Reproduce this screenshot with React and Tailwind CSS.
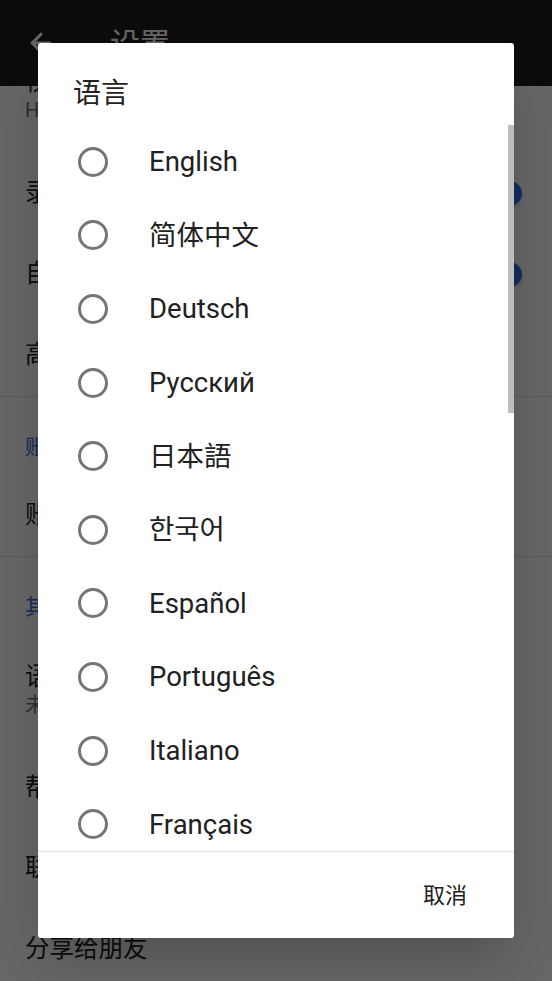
import { ArrowLeft } from "lucide-react";

const languages = [
  "English",
  "简体中文",
  "Deutsch",
  "Русский",
  "日本語",
  "한국어",
  "Español",
  "Português",
  "Italiano",
  "Français",
  "繁體中文",
  "Nederlands",
  "Polski",
  "Türkçe",
  "Tiếng Việt",
  "Bahasa Indonesia",
  "Svenska",
  "Čeština",
  "Magyar",
  "Ελληνικά",
  "Українська",
  "ไทย",
  "Dansk",
  "Suomi",
];

function Switch() {
  return (
    <div className="relative w-[52px] h-[25px] flex items-center">
      <div className="w-full h-[20px] rounded-full bg-[#90b8f5]" />
      <div className="absolute right-0 top-0 w-[25px] h-[25px] rounded-full bg-[#2f74e6] shadow-md" />
    </div>
  );
}

function Row({ title, sub, height, toggle }) {
  return (
    <div
      className="flex items-center justify-between pl-[25px] pr-[30px]"
      style={{ height }}
    >
      <div className="flex flex-col">
        <span className="text-[24.5px] leading-[28px] text-[#212121]">{title}</span>
        {sub && (
          <span className="text-[20px] leading-[28px] text-[#757575]">{sub}</span>
        )}
      </div>
      {toggle && <Switch />}
    </div>
  );
}

function Section({ title }) {
  return (
    <div className="pt-[36px] pb-[13px] pl-[25px] text-[21px] leading-[28px] text-[#2f6fd6]">
      {title}
    </div>
  );
}

export default function App() {
  return (
    <div className="relative w-[552px] h-[981px] overflow-hidden bg-white font-['Roboto','Noto_Sans_CJK_SC',sans-serif]">
      <div className="relative z-10 h-[86px] bg-[#1f1f1f] flex items-center text-white">
        <ArrowLeft className="ml-[26px] w-[30px] h-[30px]" strokeWidth={2.5} />
        <span className="ml-[54px] text-[30px]">设置</span>
      </div>

      <div className="-mt-[46px]">
        <Row title="视频画质" sub="HD 高清" height={112} />
        <Row title="录制音频" height={82} toggle />
        <Row title="自动保存" height={80} toggle />
        <Row title="高级设置" height={82} />
        <div className="h-px bg-[#e0e0e0]" />
        <Section title="账户" />
        <Row title="账户管理" height={82} />
        <div className="h-px bg-[#e0e0e0]" />
        <Section title="其他" />
        <Row title="语言" sub="未设置" height={114} />
        <Row title="帮助" height={80} />
        <Row title="联系我们" height={80} />
        <Row title="分享给朋友" height={82} />
      </div>

      <div className="absolute inset-0 z-20 bg-black/60" />

      <div className="absolute z-30 left-[38px] top-[43px] w-[476px] h-[895px] bg-white rounded-[3px] shadow-2xl flex flex-col">
        <div className="h-[82px] shrink-0 pl-[35px] pt-[33px] text-[28px] leading-[36px] text-[#212121]">
          语言
        </div>
        <div className="relative flex-1 overflow-hidden">
          {languages.map((lang) => (
            <div key={lang} className="h-[73.6px] flex items-center pl-[40px]">
              <div className="w-[30px] h-[30px] rounded-full border-[3px] border-[#757575]" />
              <span className="ml-[41px] text-[27.5px] text-[#212121]">{lang}</span>
            </div>
          ))}
          <div className="absolute right-0 top-0 w-[6px] h-[288px] bg-[#bdbdbd]" />
        </div>
        <div className="h-[87px] shrink-0 border-t border-[#e0e0e0] flex items-center justify-end pr-[47px]">
          <span className="text-[22px] text-[#212121]">取消</span>
        </div>
      </div>
    </div>
  );
}
